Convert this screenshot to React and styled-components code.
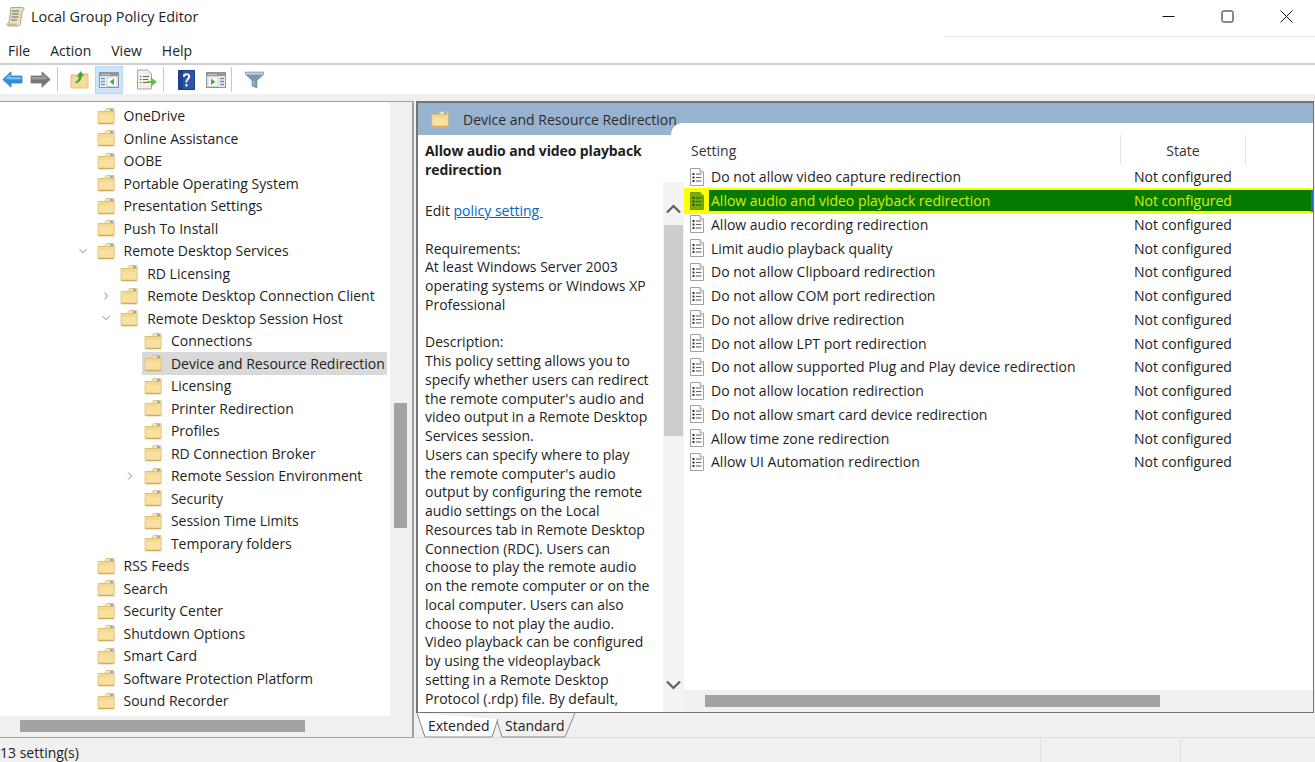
import React from 'react';
import styled, { createGlobalStyle } from 'styled-components';

const Global = createGlobalStyle`
  html, body { margin: 0; padding: 0; background: #fff; overflow: hidden; }
  * { box-sizing: border-box; }
  #root { width: 1315px; height: 762px; }
`;
const FONT = `"Open Sans", "Noto Sans", "Liberation Sans", sans-serif`;

const Window = styled.div`
  width: 1315px; height: 762px; display: flex; flex-direction: column;
  font-family: ${FONT}; font-size: 14px; color: #1e1e1e; background: #f0f0f0; overflow: hidden;
`;
const TitleBar = styled.div`
  height: 37px; background: #fff; display: flex; align-items: center; padding: 0 0 4px 6px; gap: 5px; position: relative; flex: none;
`;
const TitleRule = styled.div`
  position: absolute; left: 944px; right: 0; bottom: 0; height: 1px; background: #e8e8e8;
`;
const TitleText = styled.div` flex: 1; font-size: 14.4px; color: #222; `;
const WinBtns = styled.div` display: flex; height: 33px; align-items: center; margin-right: -1px; `;
const WinBtn = styled.div` width: 59px; height: 33px; display: flex; align-items: center; justify-content: center; `;
const MenuBar = styled.div`
  height: 28px; background: #fff; display: flex; align-items: center; padding-left: 8px; gap: 20px; flex: none;
  border-bottom: 2px solid #cfcfcf; color: #222;
`;
const Toolbar = styled.div`
  height: 29px; background: #fff; display: flex; align-items: center; flex: none;
`;
const ToolBtn = styled.div`
  width: ${p => p.$w}px; height: 28px; display: flex; align-items: center; justify-content: center; flex: none;
  padding-left: ${p => p.$pl || 0}px;
  ${p => p.$active && 'background:#cce4f7; border:1px solid #b3d7f2;'}
`;
const ToolSep = styled.div` width: 1px; height: 25px; background: #c8c8c8; flex: none; `;
const Content = styled.div`
  flex: 1; display: flex; min-height: 0; padding-top: 7px;
`;
const TreePane = styled.div`
  width: 414px; flex: none; display: flex; flex-direction: column; background: #fff;
  border-top: 1px solid #a0a0a0; border-right: 2px solid #a0a0a0; border-bottom: 1px solid #a0a0a0;
`;
const TreeBody = styled.div` flex: 1; display: flex; min-height: 0; `;
const TreeList = styled.div` flex: 1; min-width: 0; padding-top: 2.5px; overflow: hidden; `;
const TreeRow = styled.div`
  height: 22.5px; display: flex; align-items: center; padding-left: ${p => 69.5 + p.$level * 23.7}px; white-space: nowrap;
`;
const Arrow = styled.span` width: 24px; flex: none; display: flex; align-items: center; padding-left: 8px; `;
const TreeLabel = styled.div`
  display: flex; align-items: center; height: 22.5px; padding: 0 0 0 2px; margin-left: 1px; gap: 9px;
  flex: ${p => p.$sel ? '0 0 245px' : 'none'};
  background: ${p => p.$sel ? '#d9d9d9' : 'transparent'};
`;
const VTrack = styled.div`
  width: 22px; flex: none; background: #f0f0f0; padding: 301px 5px 0 4px;
`;
const VThumb = styled.div` height: 125px; background: #a3a3a3; `;
const HTrack = styled.div` height: 21px; flex: none; background: #f0f0f0; padding: 4px 0 5px 20px; `;
const HThumb = styled.div` height: 12px; width: ${p => p.$w}px; background: #a3a3a3; `;
const Gap = styled.div` width: 2px; flex: none; `;
const RightCol = styled.div` flex: 1; display: flex; flex-direction: column; min-width: 0; `;
const Frame = styled.div`
  height: 612px; margin-right: 1px; border: 2px solid #747474; border-right-width: 1px; border-bottom-width: 1px; background: #fff;
  display: flex; flex-direction: column; position: relative; flex: none;
`;
const Banner = styled.div`
  height: 32px; background: #97b3d0; display: flex; align-items: center; padding: 0 0 0 13px; gap: 14px; flex: none;
`;
const BannerText = styled.span` position: relative; z-index: 2; color: #2b2b2b; `;
const Notch = styled.div`
  position: absolute; left: 253px; top: 20px; right: 0; height: 14px; background: #fff; border-radius: 12px 0 0 0; z-index: 1;
`;
const Panes = styled.div` flex: 1; display: flex; min-height: 0; `;
const DescPane = styled.div`
  width: 245px; flex: none; padding: 7px 0 0 7px; overflow: hidden; line-height: 18.75px; white-space: pre;
`;
const DescLine = styled.div`
  height: ${p => p.$h || 18.75}px; font-weight: ${p => p.$b ? 700 : 400}; letter-spacing: ${p => p.$b ? '-0.12px' : '0'};
`;
const PolicyLink = styled.span` color: #0066cc; text-decoration: underline; `;
const DescScroll = styled.div`
  width: 21px; flex: none; margin-top: 47px; background: #f3f3f3; display: flex; flex-direction: column; align-items: center;
`;
const ScrollEnd = styled.div`
  height: ${p => p.$h}px; flex: none; display: flex; align-items: center; justify-content: center;
  padding-top: ${p => p.$pt || 0}px; padding-bottom: ${p => p.$pb || 0}px;
`;
const DescThumb = styled.div` height: 211px; width: 19px; background: #cdcdcd; flex: none; `;
const Spacer = styled.div` flex: 1; `;
const ListPane = styled.div` flex: 1; display: flex; flex-direction: column; min-width: 0; `;
const ListBody = styled.div` flex: 1; min-height: 0; `;
const HeadRow = styled.div` height: 30px; display: flex; position: relative; z-index: 1; `;
const HeadCell = styled.div`
  width: ${p => p.$w}px; height: 29px; display: flex; align-items: center; justify-content: ${p => p.$c ? 'center' : 'flex-start'};
  padding: 2px 0 0 ${p => p.$c ? 0 : 7}px; border-right: 1px solid #e5e5e5; color: #333;
`;
const Row = styled.div`
  height: 23.75px; display: flex; align-items: center; position: relative; white-space: nowrap;
`;
const SelRow = styled(Row)`
  height: 25.75px; margin: -1px 0; background: #ffff00; color: #dcef00; z-index: 1; padding-right: 2px;
`;
const SelEdge = styled.div`
  position: absolute; right: 0; top: 2px; bottom: 2px; width: 2px; background: #1c6ed0;
`;
const IconCell = styled.div` width: 25px; flex: none; display: flex; justify-content: center; `;
const NameCell = styled.div`
  width: 412px; flex: none; height: 100%; display: flex; align-items: center; padding-left: 2px;
`;
const SelFill = styled.div`
  flex: 1; height: 21px; background: #047a00; display: flex; align-items: center; padding-left: 2px;
`;
const NameSized = styled.div` width: 410px; flex: none; `;
const StateCell = styled.div` padding-left: 13px; `;
const ListH = styled.div` height: 22px; flex: none; background: #f0f0f0; padding: 5px 0 5px 21px; `;
const TabStrip = styled.div` height: 25px; flex: none; position: relative; display: flex; padding-left: 12px; border-bottom: 1px solid #dcdcdc; `;
const TabShape = styled.svg` position: absolute; left: 0; top: 0; `;
const TabLabel = styled.div` position: relative; width: ${p => p.$w}px; height: 24px; display: flex; align-items: center; color: #222; `;
const StatusBar = styled.div` height: 24px; flex: none; display: flex; align-items: center; background: #f0f0f0; padding-top: 4px; color: #222; `;
const StatusMain = styled.div` width: 1040px; flex: none; `;
const StatusDiv = styled.div` width: 140px; flex: none; height: 24px; margin-top: -4px; border-left: 1px solid #e0e0e0; `;

const Folder = () => (
  <svg width="18" height="18" viewBox="0 0 18 18">
    <path d="M1 4.500h6.500L9.500 1.500H16.500c.4 0 .7.300.7.700V5H1z" fill="#f5e6b8" stroke="#d0ad62" strokeWidth=".7"/>
    <rect x="13" y="2.300" width="3" height="1.500" fill="#6a9ad8"/>
    <path d="M1 5.500C1 4.900 1.400 4.500 2 4.500H16.300c.5 0 .9.400.9.900V16c0 .6-.4 1-1 1H2c-.6 0-1-.4-1-1z" fill="#f8e1a0" stroke="#dcb76a" strokeWidth=".7"/>
    <path d="M1.500 5.200H16.700V8H1.500z" fill="#f3d88d"/>
    <path d="M1.300 15.700H16.900V16.200c0 .4-.3.700-.7.700H2c-.4 0-.7-.3-.7-.7z" fill="#d2ab5c"/>
  </svg>
);
const Doc = ({ sel }) => {
  const line = sel ? '#2f6a00' : '#666';
  return (
    <svg width="16" height="18" viewBox="0 0 16 18">
      <path d="M1.500 .5H11l3.500 3.500V17.500H1.500z" fill={sel ? '#76ad0c' : '#fff'} stroke={sel ? '#6a9f08' : '#a0a0a0'}/>
      <path d="M11 .5V4h3.500" fill={sel ? '#98c92e' : '#f0f0f0'} stroke={sel ? '#6a9f08' : '#a0a0a0'}/>
      {[6, 9.500, 13].map(y => (
        <g key={y}>
          <rect x="3.500" y={y - 1} width="2" height="2" fill={sel ? '#214f00' : '#333'}/>
          <path d={`M7 ${y}h5.500`} stroke={line} strokeWidth="1.100"/>
        </g>
      ))}
    </svg>
  );
};
const Chevron = ({ dir }) => (
  <svg width="10" height="10" viewBox="0 0 10 10">
    <path d={dir === 'down' ? 'M1.500 3.200 5 6.700 8.500 3.200' : 'M3.200 1.500 6.700 5 3.200 8.500'} fill="none" stroke="#8a8a8a" strokeWidth="1"/>
  </svg>
);
const BigChevron = ({ up }) => (
  <svg width="15" height="10" viewBox="0 0 15 10">
    <path d={up ? 'M1 8.500 7.500 2 14 8.500' : 'M1 1.500 7.500 8 14 1.500'} fill="none" stroke="#5f5f5f" strokeWidth="2.200"/>
  </svg>
);
const ArrowIcon = ({ left, c1, c2, hi }) => (
  <svg width="21" height="17" viewBox="0 0 21 17">
    <path d={left ? 'M.8 8.500 9 .8V5H20V12H9V16.200z' : 'M20.200 8.500 12 .8V5H1V12H12V16.200z'} fill={c1} stroke={c2} strokeWidth=".8"/>
    <path d={left ? 'M3 8 8.500 3V6H19.500V8.500H8z' : 'M18 8 12.500 3V6H1.500V8.500H13z'} fill={hi} opacity=".75"/>
  </svg>
);
const Pane = ({ right }) => (
  <svg width="20" height="16" viewBox="0 0 20 16">
    <rect x=".5" y=".5" width="19" height="15" fill="#eef0f3" stroke="#8f949a"/>
    <rect x="1" y="1" width="18" height="3" fill="#8f959c"/>
    <path d="M2 2.500h9" stroke="#fff" strokeWidth=".8" opacity=".6"/>
    {right ? (
      <>
        <rect x="2" y="5" width="10" height="9.500" fill="#fff" stroke="#b0b0b0" strokeWidth=".6"/>
        <path d="M5 6.500 9.500 9.700 5 13z" fill="#3cb43c"/>
        <path d="M14 6.500h4M14 9.500h4M14 12.500h4" stroke="#7f8892" strokeWidth="1.500"/>
      </>
    ) : (
      <>
        <path d="M2 6.500h4M2 9.500h4M2 12.500h4" stroke="#5d9ad0" strokeWidth="1.500"/>
        <rect x="8" y="5" width="10" height="9.500" fill="#fff" stroke="#b0b0b0" strokeWidth=".6"/>
        <path d="M15 6.500 10.500 9.700 15 13z" fill="#3cb43c"/>
      </>
    )}
  </svg>
);
const AppIcon = () => (
  <svg width="20" height="22" viewBox="0 0 20 22">
    <path d="M5 1.500h11.500c1.500 0 2 1.500 1 2.500L16 6 14.500 17.500c-.2 1.500-1 2.500-2.500 2.500H2.500c-1.500 0-2-1.500-1-2.500L3 16z" fill="#eadfc0" stroke="#a39470" strokeWidth=".8"/>
    <path d="M6 5h7M5.700 8h7M5.400 11h7M5 14h6" stroke="#6b6b6b" strokeWidth="1.200"/>
    <path d="M1.500 17.500h9c-.5 1 0 2.500 1.500 2.500H2.500c-1.500 0-2-1.500-1-2.500z" fill="#cdbb8b"/>
  </svg>
);

const tree = [
  [0, 'OneDrive'], [0, 'Online Assistance'], [0, 'OOBE'], [0, 'Portable Operating System'],
  [0, 'Presentation Settings'], [0, 'Push To Install'], [0, 'Remote Desktop Services', 'down'],
  [1, 'RD Licensing'], [1, 'Remote Desktop Connection Client', 'right'], [1, 'Remote Desktop Session Host', 'down'],
  [2, 'Connections'], [2, 'Device and Resource Redirection', null, true], [2, 'Licensing'], [2, 'Printer Redirection'],
  [2, 'Profiles'], [2, 'RD Connection Broker'], [2, 'Remote Session Environment', 'right'], [2, 'Security'],
  [2, 'Session Time Limits'], [2, 'Temporary folders'],
  [0, 'RSS Feeds'], [0, 'Search'], [0, 'Security Center'], [0, 'Shutdown Options'], [0, 'Smart Card'],
  [0, 'Software Protection Platform'], [0, 'Sound Recorder'],
];
const desc = [
  ['Allow audio and video playback', 1], ['redirection', 1], ['', 0, 22.7], ['EDIT'], [''],
  ['Requirements:'], ['At least Windows Server 2003'], ['operating systems or Windows XP'], ['Professional'], [''],
  ['Description:'], ['This policy setting allows you to'], ['specify whether users can redirect'],
  ['the remote computer\'s audio and'], ['video output in a Remote Desktop'], ['Services session.'],
  ['Users can specify where to play'], ['the remote computer\'s audio'], ['output by configuring the remote'],
  ['audio settings on the Local'], ['Resources tab in Remote Desktop'], ['Connection (RDC). Users can'],
  ['choose to play the remote audio'], ['on the remote computer or on the'], ['local computer. Users can also'],
  ['choose to not play the audio.'], ['Video playback can be configured'], ['by using the videoplayback'],
  ['setting in a Remote Desktop'], ['Protocol (.rdp) file. By default,'],
];
const rows = [
  'Do not allow video capture redirection', 'Allow audio and video playback redirection', 'Allow audio recording redirection',
  'Limit audio playback quality', 'Do not allow Clipboard redirection', 'Do not allow COM port redirection',
  'Do not allow drive redirection', 'Do not allow LPT port redirection', 'Do not allow supported Plug and Play device redirection',
  'Do not allow location redirection', 'Do not allow smart card device redirection', 'Allow time zone redirection', 'Allow UI Automation redirection',
];

export default function App() {
  return (
    <Window>
      <Global />
      <TitleBar>
        <AppIcon />
        <TitleText>Local Group Policy Editor</TitleText>
        <WinBtns>
          <WinBtn><svg width="13" height="13" viewBox="0 0 13 13"><path d="M.5 6.500h12" stroke="#111"/></svg></WinBtn>
          <WinBtn><svg width="13" height="13" viewBox="0 0 13 13"><rect x="1" y="1" width="11" height="11" rx="1.500" fill="none" stroke="#111"/></svg></WinBtn>
          <WinBtn><svg width="13" height="13" viewBox="0 0 13 13"><path d="M.5.500l12 12M12.500.500l-12 12" stroke="#111"/></svg></WinBtn>
        </WinBtns>
        <TitleRule />
      </TitleBar>
      <MenuBar><span>File</span><span>Action</span><span>View</span><span>Help</span></MenuBar>
      <Toolbar>
        <ToolBtn $w={24}><ArrowIcon left c1="#2f8fe0" c2="#3b7fc0" hi="#8cc8f5" /></ToolBtn>
        <ToolBtn $w={33}><ArrowIcon c1="#777" c2="#777" hi="#a8a8a8" /></ToolBtn>
        <ToolSep />
        <ToolBtn $w={37} $pl={6}>
          <svg width="19" height="19" viewBox="0 0 19 19">
            <path d="M1 5h6l1-1h10v14H1z" fill="#f2d48a" stroke="#c9a75e" strokeWidth=".7"/>
            <path d="M1.500 7.500h16V17.500h-16z" fill="#f5dc9c"/>
            <path d="M5 12c2.500-.5 3.500-2.500 3.800-5H7l3.500-6 3.500 5h-2c-.3 4-3 6.500-6 7.500z" fill="#42a53a"/>
          </svg>
        </ToolBtn>
        <ToolBtn $w={28} $active><Pane /></ToolBtn>
        <ToolBtn $w={40} $pl={8}>
          <svg width="22" height="21" viewBox="0 0 22 21">
            <path d="M1.500 1h10l4 4v15h-14z" fill="#f3efe2" stroke="#a5a5a5"/>
            <path d="M4 7.500h1.500M7 7.500h6M4 10.500h1.500M7 10.500h5M4 13.500h1.500M7 13.500h4" stroke="#666"/>
            <path d="M11 12h4V8.500l6 4.500-6 4.500V14h-4z" fill="#5fbf3e"/>
          </svg>
        </ToolBtn>
        <ToolSep />
        <ToolBtn $w={36} $pl={8}>
          <svg width="17" height="20" viewBox="0 0 17 20">
            <rect x=".5" y=".5" width="16" height="19" fill="#2a55ad" stroke="#1d3d85"/>
            <rect x="1" y="1" width="4" height="18" fill="#1f4192"/>
            <path d="M4.800 6.500c0-4.300 7.400-4.300 7.400 0 0 3-3 3.200-3 6H7.500c0-4 2.700-3.700 2.700-6 0-1.700-3.300-1.700-3.300.5z" fill="#fff"/>
            <rect x="7.500" y="14" width="1.900" height="2.500" fill="#fff"/>
          </svg>
        </ToolBtn>
        <ToolBtn $w={31}><Pane right /></ToolBtn>
        <ToolSep />
        <ToolBtn $w={44}>
          <svg width="19" height="18" viewBox="0 0 19 18">
            <path d="M.5 1h18v2.500l-6.500 6V17l-5-2V9.500l-6.500-6z" fill="#7d98b3" stroke="#7a8fa5" strokeWidth=".6"/>
            <path d="M1 1.500h17v2H1z" fill="#c6d3df"/>
            <path d="M8 10h1.500v5L8 14.500z" fill="#a8bccd"/>
          </svg>
        </ToolBtn>
      </Toolbar>
      <Content>
        <TreePane>
          <TreeBody>
            <TreeList>
              {tree.map(([lvl, name, arrow, sel]) => (
                <TreeRow key={name} $level={lvl}>
                  <Arrow>{arrow && <Chevron dir={arrow} />}</Arrow>
                  <TreeLabel $sel={sel}><Folder />{name}</TreeLabel>
                </TreeRow>
              ))}
            </TreeList>
            <VTrack><VThumb /></VTrack>
          </TreeBody>
          <HTrack><HThumb $w={285} /></HTrack>
        </TreePane>
        <Gap />
        <RightCol>
          <Frame>
            <Banner><Folder /><BannerText>Device and Resource Redirection</BannerText></Banner>
            <Notch />
            <Panes>
              <DescPane>
                {desc.map(([t, b, h], i) => (
                  <DescLine key={i} $b={b} $h={h}>{t === 'EDIT' ? <>Edit <PolicyLink>policy setting </PolicyLink></> : t}</DescLine>
                ))}
              </DescPane>
              <DescScroll>
                <ScrollEnd $h={43} $pt={10}><BigChevron up /></ScrollEnd>
                <DescThumb />
                <Spacer />
                <ScrollEnd $h={38} $pb={16}><BigChevron /></ScrollEnd>
              </DescScroll>
              <ListPane>
                <ListBody>
                  <HeadRow>
                    <HeadCell $w={437}>Setting</HeadCell>
                    <HeadCell $w={125} $c>State</HeadCell>
                  </HeadRow>
                  {rows.map((r, i) => i === 1 ? (
                    <SelRow key={r}>
                      <IconCell><Doc sel /></IconCell>
                      <SelFill><NameSized>{r}</NameSized><StateCell>Not configured</StateCell></SelFill>
                      <SelEdge />
                    </SelRow>
                  ) : (
                    <Row key={r}>
                      <IconCell><Doc /></IconCell>
                      <NameCell>{r}</NameCell>
                      <StateCell>Not configured</StateCell>
                    </Row>
                  ))}
                </ListBody>
                <ListH><HThumb $w={455} /></ListH>
              </ListPane>
            </Panes>
          </Frame>
          <TabStrip>
            <TabShape width="170" height="25" viewBox="-1 0 170 25">
              <path d="M0 0 8 24H75L81 6" fill="#fff" stroke="#8a8a8a"/>
              <path d="M80 8 85 24H148L158 0" fill="none" stroke="#8a8a8a"/>
            </TabShape>
            <TabLabel $w={77}>Extended</TabLabel>
            <TabLabel $w={70}>Standard</TabLabel>
          </TabStrip>
        </RightCol>
      </Content>
      <StatusBar><StatusMain>13 setting(s)</StatusMain><StatusDiv /><StatusDiv /></StatusBar>
    </Window>
  );
}
